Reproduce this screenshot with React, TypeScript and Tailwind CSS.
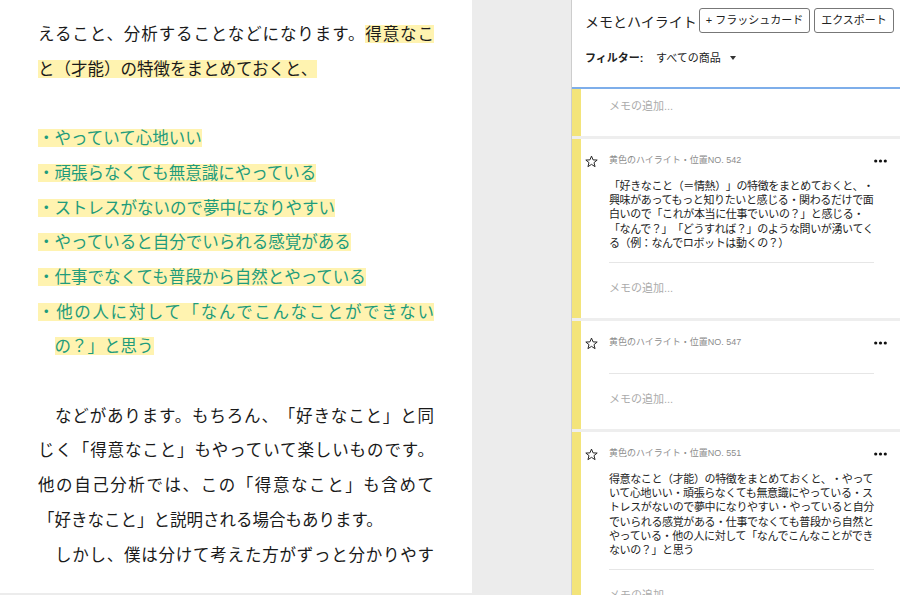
import React from 'react'

type Part = [string, boolean]
type Line = { parts: Part[]; green?: boolean; justify?: boolean; indent?: boolean; hang?: boolean }

const FONT = '"Liberation Sans", "Noto Sans CJK JP", sans-serif'

const lines: (Line | null)[] = [
  { parts: [['えること、分析することなどになります。', false], ['得意なこ', true]], justify: true },
  { parts: [['と（才能）の特徴をまとめておくと、', true]] },
  null,
  { parts: [['・やっていて心地いい', true]], green: true },
  { parts: [['・頑張らなくても無意識にやっている', true]], green: true },
  { parts: [['・ストレスがないので夢中になりやすい', true]], green: true },
  { parts: [['・やっていると自分でいられる感覚がある', true]], green: true },
  { parts: [['・仕事でなくても普段から自然とやっている', true]], green: true },
  { parts: [['・他の人に対して「なんでこんなことができない', true]], green: true, justify: true },
  { parts: [['の？」と思う', true]], green: true, hang: true },
  null,
  { parts: [['などがあります。もちろん、「好きなこと」と同', false]], justify: true, indent: true },
  { parts: [['じく「得意なこと」もやっていて楽しいものです。', false]], justify: true },
  { parts: [['他の自己分析では、この「得意なこと」も含めて', false]], justify: true },
  { parts: [['「好きなこと」と説明される場合もあります。', false]] },
  { parts: [['しかし、僕は分けて考えた方がずっと分かりやす', false]], justify: true, indent: true },
]

// wrapped the way the panel wraps them
const notes = [
  {
    no: 542,
    text: [
      '「好きなこと（＝情熱）」の特徴をまとめておくと、・',
      '興味があってもっと知りたいと感じる・関わるだけで面',
      '白いので「これが本当に仕事でいいの？」と感じる・',
      '「なんで？」「どうすれば？」のような問いが湧いてく',
      'る（例：なんでロボットは動くの？）',
    ],
  },
  { no: 547, text: [] as string[] },
  {
    no: 551,
    text: [
      '得意なこと（才能）の特徴をまとめておくと、・やって',
      'いて心地いい・頑張らなくても無意識にやっている・ス',
      'トレスがないので夢中になりやすい・やっていると自分',
      'でいられる感覚がある・仕事でなくても普段から自然と',
      'やっている・他の人に対して「なんでこんなことができ',
      'ないの？」と思う',
    ],
  },
]

function Star() {
  return (
    <svg width="13" height="13" viewBox="0 0 24 24" fill="none" stroke="#222" strokeWidth="1.8">
      <polygon points="12,2 14.9,9 22.5,9.3 16.6,14.1 18.6,21.5 12,17.3 5.4,21.5 7.4,14.1 1.5,9.3 9.1,9" />
    </svg>
  )
}

function Dots() {
  return (
    <svg width="13" height="4" viewBox="0 0 13 4">
      <circle cx="1.7" cy="2" r="1.6" fill="#111" />
      <circle cx="6.5" cy="2" r="1.6" fill="#111" />
      <circle cx="11.3" cy="2" r="1.6" fill="#111" />
    </svg>
  )
}

function NoteCard({ no, text }: { no: number; text: string[] }) {
  return (
    <div className="flex shrink-0 bg-white">
      <div className="w-[9px] shrink-0 bg-[#f3e47a]" />
      <div className="flex-1 pl-[4px] pr-[13px] pt-[15px]">
        <div className="flex h-[14px] items-center">
          <div className="flex w-[24px] items-center">
            <Star />
          </div>
          <div className="flex-1 text-[9px] text-[#8c8c8c]">黄色のハイライト・位置NO. {no}</div>
          <Dots />
        </div>
        <div className="pl-[24px] pt-[11px] pb-[12px] text-[11px] leading-[14.2px] tracking-[-0.38px] whitespace-nowrap text-[#222]">
          {text.map((t, i) => (
            <div key={i}>{t}</div>
          ))}
        </div>
        <div className="ml-[24px] w-[265px] border-t border-[#e6e6e6]" />
        <div className="pt-[18px] pb-[23px] pl-[24px] text-[11px] leading-[14px] text-[#ababab]">メモの追加...</div>
      </div>
    </div>
  )
}

export default function App() {
  return (
    <div
      className="flex h-[595px] w-[900px] overflow-hidden bg-[#ececec] [text-spacing-trim:space-all]"
      style={{ fontFamily: FONT }}
    >
      <div className="h-[593px] w-[472px] shrink-0 bg-white pl-[38px] pt-[17px]">
        <div className="w-[396px] text-[16.5px] leading-[34.7px] text-[#1a1a1a]">
          {lines.map((l, i) =>
            l === null ? (
              <div key={i} className="h-[34.7px]" />
            ) : (
              <div
                key={i}
                className={
                  (l.green ? 'text-[#1f9c7c] ' : '') +
                  (l.justify ? 'text-justify [text-align-last:justify] ' : '') +
                  (l.indent ? 'indent-[17px] ' : '') +
                  (l.hang ? 'pl-[16.5px] ' : '')
                }
              >
                {l.parts.map(([t, hl], j) => (
                  <span key={j} className={hl ? 'bg-[#fff3b0]' : ''}>
                    {t}
                  </span>
                ))}
              </div>
            )
          )}
        </div>
      </div>
      <div className="w-[99px] shrink-0" />
      <div className="flex flex-1 flex-col border-l border-[#cdcdcd] bg-[#eeeeee]">
        <div className="h-[87px] shrink-0 bg-white pl-[13px] pt-[8px]">
          <div className="flex items-center">
            <div className="w-[114px] pt-[3px] text-[14px] text-[#222]">メモとハイライト</div>
            <button className="h-[25px] w-[111px] rounded-[3px] border border-[#777] bg-white text-[11px] text-[#222]">
              + フラッシュカード
            </button>
            <button className="ml-[4px] h-[25px] w-[80px] rounded-[3px] border border-[#777] bg-white text-[11px] text-[#222]">
              エクスポート
            </button>
          </div>
          <div className="mt-[18px] flex items-center text-[11px] leading-[14px] text-[#222]">
            <span className="w-[71px] font-bold">フィルター:</span>
            <span>すべての商品</span>
            <svg className="ml-[9px]" width="6" height="4" viewBox="0 0 6 4">
              <polygon points="0,0 6,0 3,4" fill="#333" />
            </svg>
          </div>
        </div>
        <div className="h-[2px] shrink-0 bg-[#7eaeea]" />
        <div className="flex shrink-0 bg-white">
          <div className="w-[9px] shrink-0 bg-[#f3e47a]" />
          <div className="flex-1 pt-[10px] pb-[23px] pl-[28px] text-[11px] leading-[14px] text-[#ababab]">メモの追加...</div>
        </div>
        <div className="flex shrink-0 flex-col gap-[3px] pt-[3px]">
          {notes.map(n => (
            <NoteCard key={n.no} no={n.no} text={n.text} />
          ))}
        </div>
      </div>
    </div>
  )
}
